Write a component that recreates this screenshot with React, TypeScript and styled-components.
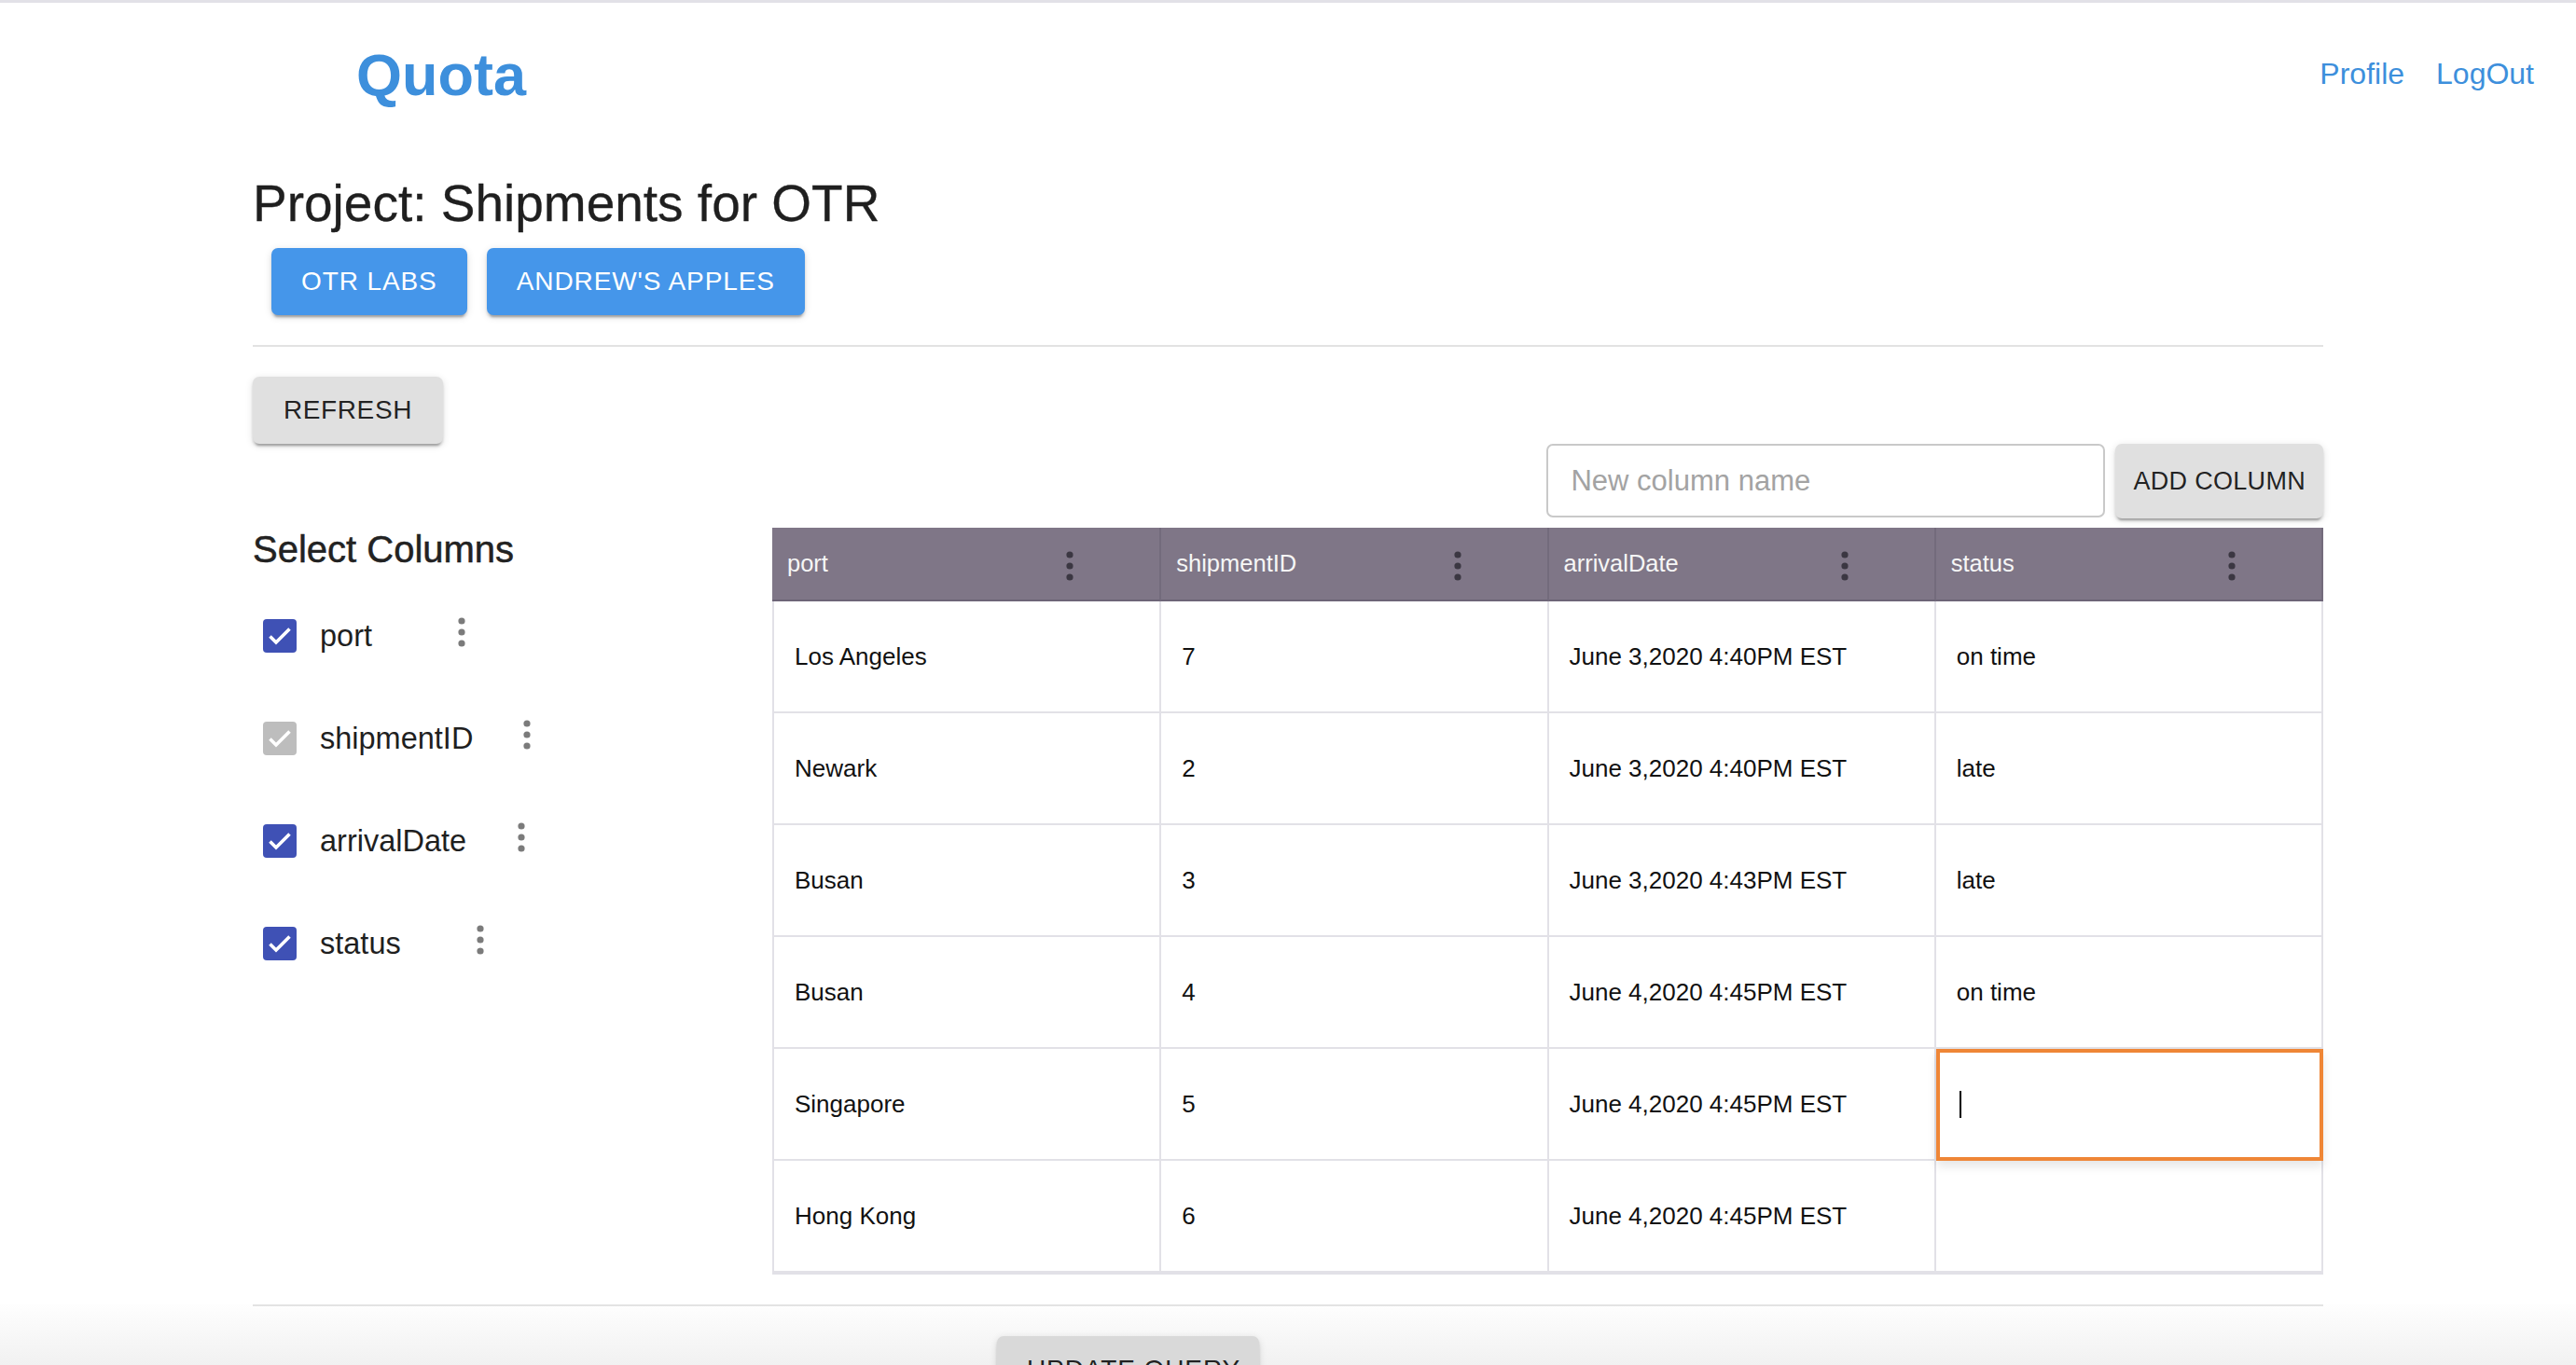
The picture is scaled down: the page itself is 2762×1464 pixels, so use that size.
import React from 'react'
import styled, { createGlobalStyle } from 'styled-components'

const GlobalStyle = createGlobalStyle`
  html, body {
    margin: 0;
    padding: 0;
    background: #fff;
    font-family: 'Liberation Sans', Arial, sans-serif;
    color: #222;
  }
  * {
    box-sizing: border-box;
  }
`

const columns = ['port', 'shipmentID', 'arrivalDate', 'status']

// label widths keep the menu dots where the original list puts them
const columnPicks = [
  { name: 'port', checked: true, disabled: false, labelWidth: 148 },
  { name: 'shipmentID', checked: true, disabled: true, labelWidth: 218 },
  { name: 'arrivalDate', checked: true, disabled: false, labelWidth: 212 },
  { name: 'status', checked: true, disabled: false, labelWidth: 168 },
]

const rows = [
  ['Los Angeles', '7', 'June 3,2020 4:40PM EST', 'on time'],
  ['Newark', '2', 'June 3,2020 4:40PM EST', 'late'],
  ['Busan', '3', 'June 3,2020 4:43PM EST', 'late'],
  ['Busan', '4', 'June 4,2020 4:45PM EST', 'on time'],
  ['Singapore', '5', 'June 4,2020 4:45PM EST', null],
  ['Hong Kong', '6', 'June 4,2020 4:45PM EST', ''],
]

const Nav = styled.header`
  display: flex;
  align-items: center;
  justify-content: space-between;
  border-top: 3px solid #e2e1e7;
  padding: 41px 45px 0 382px;
`

const Brand = styled.div`
  font-size: 63px;
  line-height: 72px;
  font-weight: 700;
  color: #3d8fdc;
`

const NavLinks = styled.nav`
  display: flex;
  gap: 34px;
  margin-top: -2px;
`

const NavLink = styled.a`
  font-size: 32px;
  line-height: 37px;
  color: #3d8fdc;
  text-decoration: none;
  cursor: pointer;
`

const Container = styled.main`
  width: 2220px;
  margin: 0 auto;
`

const Title = styled.h1`
  margin: 71px 0 0;
  font-size: 55px;
  line-height: 62px;
  font-weight: 400;
  color: #1f1f1f;
  -webkit-text-stroke: 0.3px #1f1f1f;
`

const ChipRow = styled.div`
  display: flex;
  gap: 21px;
  margin: 17px 0 0 20px;
`

const Button = styled.button<{ $primary?: boolean; $compact?: boolean }>`
  height: ${({ $compact }) => ($compact ? 80 : 72)}px;
  padding: 0 ${({ $compact }) => ($compact ? 19 : 32)}px;
  border: none;
  border-radius: 7px;
  background: ${({ $primary }) => ($primary ? '#4596ea' : '#e0e0e0')};
  color: ${({ $primary }) => ($primary ? '#fff' : 'rgba(0, 0, 0, 0.87)')};
  font-family: 'Liberation Sans', Arial, sans-serif;
  font-size: ${({ $compact }) => ($compact ? 27 : 28)}px;
  letter-spacing: ${({ $compact }) => ($compact ? 0.3 : 0.9)}px;
  text-transform: uppercase;
  white-space: nowrap;
  cursor: pointer;
  box-shadow: 0 5px 2px -3px rgba(0, 0, 0, 0.2), 0 3px 3px 0 rgba(0, 0, 0, 0.14), 0 2px 8px 0 rgba(0, 0, 0, 0.12);
`

const Rule = styled.hr`
  margin: 32px 0 0;
  border: none;
  border-top: 2px solid #e2e2e2;
`

const RefreshRow = styled.div`
  margin-top: 32px;
  display: flex;
`

const RefreshButton = styled(Button)`
  padding: 0 33px;
  letter-spacing: 0.6px;
`

const Body = styled.section`
  display: grid;
  grid-template-columns: 557px 1fr;
`

const Picker = styled.aside`
  display: flex;
  flex-direction: column;
`

const PickerTitle = styled.h2`
  margin: 91px 0 0;
  font-size: 40px;
  line-height: 45px;
  font-weight: 400;
  color: #222;
  -webkit-text-stroke: 0.5px #222;
`

const PickList = styled.div`
  display: flex;
  flex-direction: column;
  gap: 74px;
  margin: 52px 0 0 11px;
`

const PickItem = styled.label`
  display: flex;
  align-items: center;
  height: 36px;
  cursor: pointer;
`

const Box = styled.span<{ $disabled?: boolean }>`
  display: flex;
  width: 36px;
  height: 36px;
  border-radius: 4px;
  background: ${({ $disabled }) => ($disabled ? '#bdbdbd' : '#3f51b5')};
`

const PickLabel = styled.span<{ $width: number }>`
  width: ${({ $width }) => $width}px;
  margin-left: 25px;
  font-size: 32.5px;
  line-height: 36px;
  color: #1f1f1f;
`

const Kebab = styled.svg<{ $tone: string }>`
  flex: none;
  width: 8px;
  height: 32px;
  fill: ${({ $tone }) => $tone};
`

const PickMenu = styled.span`
  display: flex;
  margin-bottom: 8px;
`

const TablePanel = styled.div`
  display: flex;
  flex-direction: column;
`

const Toolbar = styled.div`
  display: flex;
  justify-content: flex-end;
  gap: 11px;
  height: 80px;
`

const ColumnInput = styled.input`
  width: 599px;
  height: 79px;
  border: 2px solid #c9c9c9;
  border-radius: 7px;
  padding: 0 24px;
  font-family: 'Liberation Sans', Arial, sans-serif;
  font-size: 31px;
  color: #222;
  outline: none;

  &::placeholder {
    color: #a3a3a3;
  }
`

const Grid = styled.div`
  display: grid;
  grid-template-columns: repeat(4, 1fr);
  margin-top: 10px;
  border-left: 2px solid #e2e1e7;
  border-bottom: 2px solid #e2e1e7;
`

const HeadCell = styled.div`
  display: flex;
  align-items: center;
  justify-content: space-between;
  height: 79px;
  padding: 0 92px 0 16px;
  background: #7f7687;
  border-right: 2px solid #736b7c;
  border-bottom: 2px solid #6d6577;
  color: #f6f6f6;
  font-size: 25.5px;

  &:first-child {
    margin-left: -2px;
  }
`

const HeadMenu = styled.span`
  display: flex;
  margin-top: 4px;
`

const Cell = styled.div<{ $editing?: boolean }>`
  position: relative;
  display: flex;
  align-items: center;
  height: 120px;
  padding: 0 22px;
  border-right: 2px solid #e2e1e7;
  border-bottom: 2px solid #e2e1e7;
  font-size: 26px;
  color: #111;
  background: #fff;
  ${({ $editing }) =>
    $editing &&
    `
      z-index: 1;
      outline: 4px solid #ef8636;
      outline-offset: -4px;
      box-shadow: 0 6px 10px rgba(0, 0, 0, 0.1);
    `}
`

const Caret = styled.span`
  width: 2px;
  height: 29px;
  margin-left: 3px;
  background: #000;
`

const Footer = styled.footer`
  margin-top: 32px;
  background: linear-gradient(#fefefe, #f0f0f0 70px);
  min-height: 140px;
`

const FooterInner = styled.div`
  width: 2220px;
  margin: 0 auto;
  border-top: 2px solid #e3e3e3;
  padding: 32px 0 0 798px;
`

const FooterButton = styled(Button)`
  width: 281px;
  background: #d9d9d9;
`

const Dots = ({ tone }: { tone: string }) => (
  <Kebab $tone={tone} viewBox="0 0 8 32">
    <circle cx="4" cy="4" r="3.6" />
    <circle cx="4" cy="16" r="3.6" />
    <circle cx="4" cy="28" r="3.6" />
  </Kebab>
)

const CheckBox = ({ disabled }: { disabled?: boolean }) => (
  <Box $disabled={disabled}>
    <svg width="36" height="36" viewBox="0 0 36 36">
      <polyline points="7.5,18.5 14,25 28.5,10.5" fill="none" stroke="#fff" strokeWidth="3.6" />
    </svg>
  </Box>
)

const App = () => {
  return (
    <>
      <GlobalStyle />
      <Nav>
        <Brand>Quota</Brand>
        <NavLinks>
          <NavLink>Profile</NavLink>
          <NavLink>LogOut</NavLink>
        </NavLinks>
      </Nav>

      <Container>
        <Title>Project: Shipments for OTR</Title>
        <ChipRow>
          <Button $primary>OTR Labs</Button>
          <Button $primary>Andrew's Apples</Button>
        </ChipRow>
        <Rule />
        <RefreshRow>
          <RefreshButton>Refresh</RefreshButton>
        </RefreshRow>

        <Body>
          <Picker>
            <PickerTitle>Select Columns</PickerTitle>
            <PickList>
              {columnPicks.map(pick => (
                <PickItem key={pick.name}>
                  <CheckBox disabled={pick.disabled} />
                  <PickLabel $width={pick.labelWidth}>{pick.name}</PickLabel>
                  <PickMenu>
                    <Dots tone="#7b7b7b" />
                  </PickMenu>
                </PickItem>
              ))}
            </PickList>
          </Picker>

          <TablePanel>
            <Toolbar>
              <ColumnInput placeholder="New column name" />
              <Button $compact>Add Column</Button>
            </Toolbar>
            <Grid>
              {columns.map(col => (
                <HeadCell key={col}>
                  <span>{col}</span>
                  <HeadMenu>
                    <Dots tone="#3b3742" />
                  </HeadMenu>
                </HeadCell>
              ))}
              {rows.map((row, r) =>
                row.map((value, c) =>
                  value === null ? (
                    <Cell key={`${r}-${c}`} $editing>
                      <Caret />
                    </Cell>
                  ) : (
                    <Cell key={`${r}-${c}`}>{value}</Cell>
                  )
                )
              )}
            </Grid>
          </TablePanel>
        </Body>
      </Container>

      <Footer>
        <FooterInner>
          <FooterButton>Update Query</FooterButton>
        </FooterInner>
      </Footer>
    </>
  )
}

export default App
